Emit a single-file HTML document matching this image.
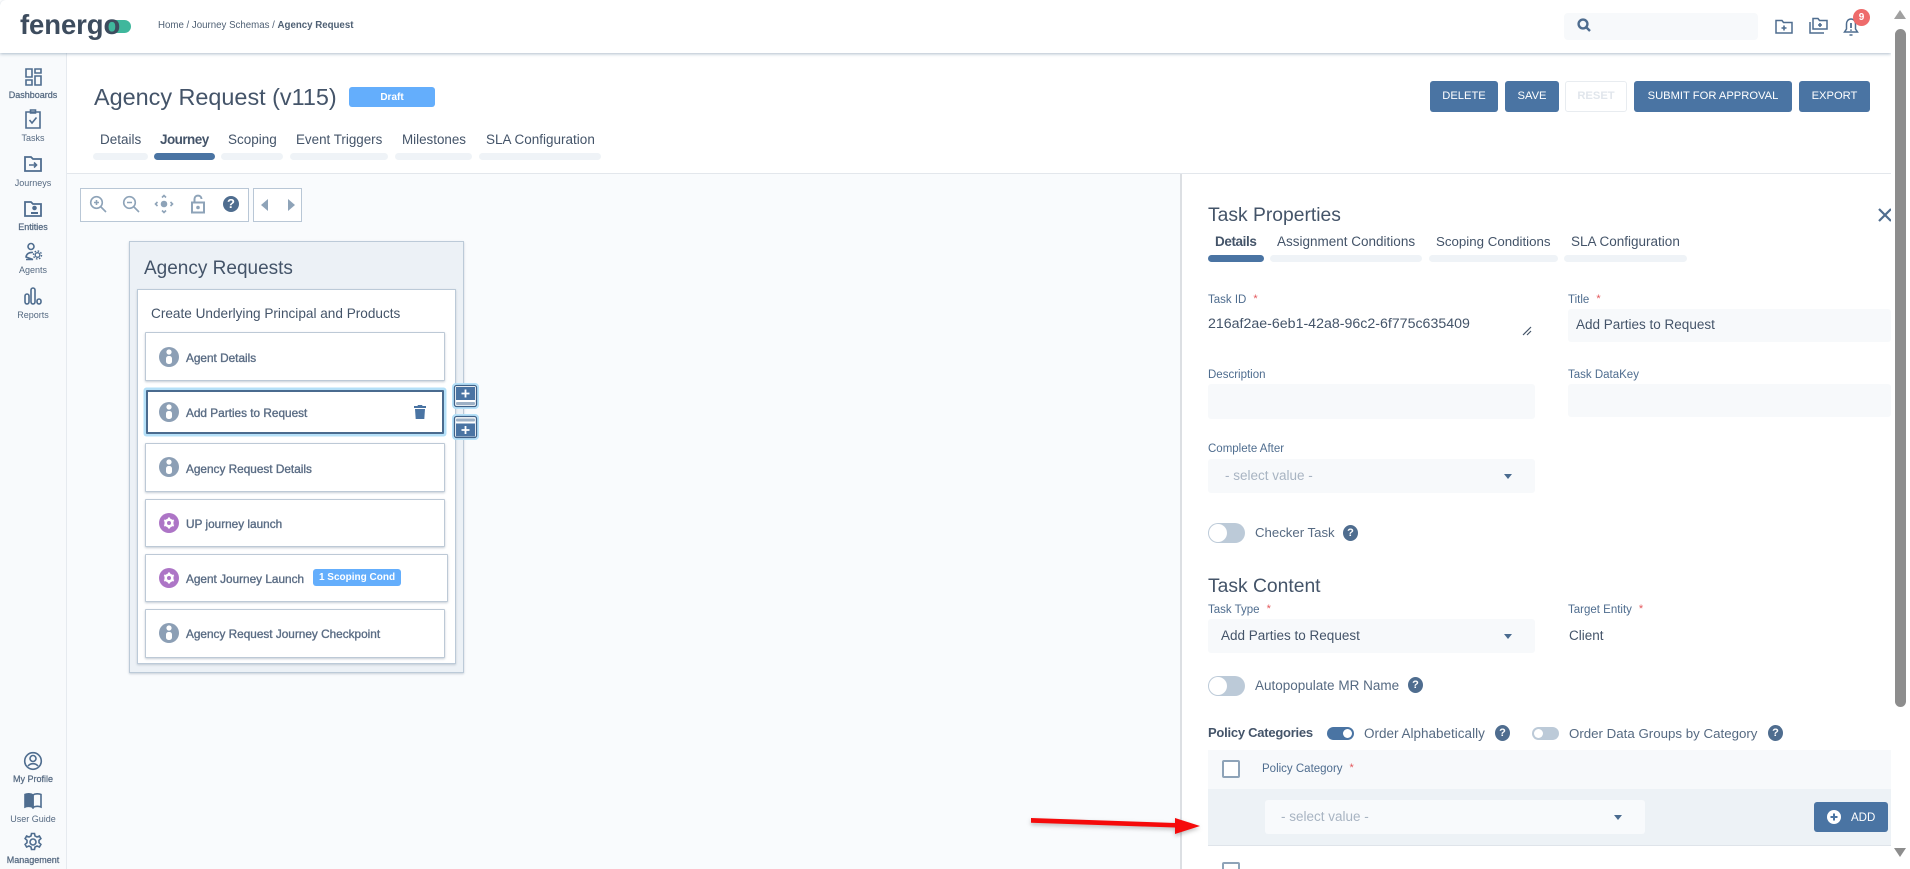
<!DOCTYPE html>
<html lang="en"><head><meta charset="utf-8"><title>Agency Request</title>
<style>
html,body{margin:0;padding:0;width:1910px;height:869px;overflow:hidden;background:#fff}
body{position:relative;font-family:"Liberation Sans",sans-serif;color:#445469}
.a,.t{position:absolute}
.t{white-space:nowrap;line-height:16px;transform:translateY(-7px)}
.bar{position:absolute;height:7px;border-radius:4px;background:#eff3f7}
.bar.on{background:#4a74a3}
.btn{position:absolute;top:81px;height:31px;line-height:31px;text-align:center;background:#4a74a3;color:#fff;font-size:11.2px;border-radius:3px}
.sl{position:absolute;left:0;width:66px;text-align:center;font-size:9px;line-height:12px;color:#566a82}
.sl.b{-webkit-text-stroke:.25px #566a82}
.side svg{position:absolute;left:23px;width:20px;height:20px;fill:none;stroke:#4f6d8f;stroke-width:1.6}
.lab{font-size:11.5px;color:#4f6d8f}
.req{color:#e4575b;font-size:11px;margin-left:7px;position:relative;top:-1px}
.inp{position:absolute;background:#f7f9fb;border-radius:3px}
.card{position:absolute;left:145px;width:299px;background:#fff;border:1px solid #bdc9d6;box-shadow:0 1px 2px rgba(90,110,135,.35);border-radius:1px;box-sizing:border-box}
.ic{position:absolute;left:159px;width:20px;height:20px}
.ct{font-size:11.8px;color:#5a6c84;left:186px;-webkit-text-stroke:.35px #5a6c84}
.val{font-size:13.5px;color:#445469}
.caret{position:absolute;width:0;height:0;border-left:4.5px solid transparent;border-right:4.5px solid transparent;border-top:5px solid #4a6b8f}
.tog{position:absolute;width:37px;height:20px;border-radius:10px;background:#bccad8}
.tog:after{content:"";position:absolute;left:1px;top:1px;width:18px;height:18px;border-radius:50%;background:#fff}
.tog.s{width:27px;height:13px;border-radius:7px}
.tog.s:after{width:9px;height:9px;left:2px;top:2px}
.tog.s.on{background:#4a74a3}
.tog.s.on:after{left:16px}
.q{position:absolute;width:15px;height:16px;border-radius:50%;background:#4f6d8f;color:#fff;font-size:11px;font-weight:bold;text-align:center;line-height:16px}
.h2{font-size:19.3px;color:#445469}
.tool svg{position:absolute;width:20px;height:20px;fill:none;stroke:#8ea3b8;stroke-width:1.6}
.hd svg{position:absolute;fill:none;stroke:#4f6d8f;stroke-width:1.5}
</style></head><body>

<!-- page backgrounds -->
<div class="a" style="left:66px;top:174px;width:1115px;height:695px;background:#f9fbfd"></div>
<div class="a" style="left:66px;top:173px;width:1825px;height:1px;background:#e3e7ec"></div>
<div class="a" style="left:0;top:53px;width:66px;height:816px;background:#f8fafc;border-right:1px solid #e6eaef"></div>

<!-- header -->
<div class="a hd" style="left:0;top:0;width:1891px;height:53px;background:#fff;box-shadow:0 1px 3px rgba(110,135,160,.55);border-radius:6px 0 0 0">
  <div class="a" style="left:108px;top:20px;width:23px;height:13px;border-radius:0 7px 7px 0;background:#3fb79c"></div>
  <div class="t" style="left:20px;top:25px;font-size:27.5px;line-height:36px;transform:translateY(-18px);font-weight:bold;color:#3d4c5e;letter-spacing:-.1px">fenergo</div>
  <div class="t" style="left:158px;top:25px;font-size:9.7px;color:#4f6074">Home / Journey Schemas / <b>Agency Request</b></div>
  <div class="a" style="left:1564px;top:13px;width:194px;height:27px;background:#f7f9fb;border-radius:4px"></div>
  <svg style="left:1577px;top:18px;width:14px;height:14px;stroke-width:2.4" viewBox="0 0 14 14"><circle cx="6" cy="6" r="4.4"/><path d="M9.5 9.5L13 13"/></svg>
  <svg style="left:1775px;top:18px;width:18px;height:16px" viewBox="0 0 18 16"><path d="M1 2.500h6l1.500 2H17V15H1z"/><path d="M9 7.500v5M6.500 10h5" stroke-width="1.600"/></svg>
  <svg style="left:1809px;top:17px;width:19px;height:17px" viewBox="0 0 19 17"><path d="M4 1.500h5l1.500 2H18V12H4z"/><path d="M1 5v11h14"/><path d="M11 6v4M9 8h4" stroke-width="1.600"/></svg>
  <svg style="left:1843px;top:17px;width:16px;height:20px" viewBox="0 0 16 20"><path d="M8 2c-3 0-4.500 2.500-4.500 5v5L1.500 15h13l-2-3V7C12.500 4.500 11 2 8 2z"/><path d="M8 6v5M8 12.500v1.300" stroke-width="1.800"/><path d="M6.500 18h3"/></svg>
  <div class="a" style="left:1853px;top:9px;width:17px;height:17px;border-radius:50%;background:#ee6b6b;color:#fff;font-size:10px;font-weight:bold;line-height:17px;text-align:center">9</div>
</div>

<!-- sidebar -->
<div class="side">
  <svg style="top:67px" viewBox="0 0 20 20"><path d="M3 2h6v8H3zM12 2h6v4h-6zM3 13h6v5H3zM12 9h6v9h-6z"/></svg><div class="sl b" style="top:89px">Dashboards</div>
  <svg style="top:109px" viewBox="0 0 20 20"><path d="M3 3h14v16H3zM7.500 1h5v3h-5z"/><path d="M6.500 11l2.500 3 4.500-5.500"/></svg><div class="sl" style="top:132px">Tasks</div>
  <svg style="top:154px" viewBox="0 0 20 20"><path d="M2 3h6l2 2h8v12H2z" stroke-width="1.800"/><path d="M6 11h7M11 8.500l2.500 2.500-2.500 2.500"/></svg><div class="sl" style="top:177px">Journeys</div>
  <svg style="top:199px" viewBox="0 0 20 20"><path d="M2 3h6l2 2h8v12H2z" stroke-width="1.800"/><circle cx="11.500" cy="9" r="1.500" fill="#4f6d8f"/><path d="M8 14h7" stroke-width="2"/></svg><div class="sl b" style="top:221px">Entities</div>
  <svg style="top:242px" viewBox="0 0 20 20"><circle cx="8" cy="4.500" r="3"/><path d="M10 10.500C6 10 3.500 12 3 15l7 2.500H3"/><circle cx="14.500" cy="13" r="2.300" stroke-width="1.300"/><circle cx="14.500" cy="13" r="4" stroke-width="1.400" stroke-dasharray="1.600 1.540"/></svg><div class="sl" style="top:264px">Agents</div>
  <svg style="top:286px" viewBox="0 0 20 20"><rect x="2" y="8" width="4" height="10" rx="2"/><rect x="8" y="2" width="4" height="16" rx="2"/><rect x="14" y="13" width="4" height="5" rx="2"/></svg><div class="sl" style="top:309px">Reports</div>
  <svg style="top:751px" viewBox="0 0 20 20"><circle cx="10" cy="10" r="8.300"/><circle cx="10" cy="7.500" r="3"/><path d="M5 15c1.500-1.800 3-2.300 5-2.300s3.500.5 5 2.300"/></svg><div class="sl b" style="top:773px">My Profile</div>
  <svg style="top:791px" viewBox="0 0 20 20"><path d="M10 4C8 2.500 4 2.500 2 3.500V16c2-1 6-1 8 .5z" fill="#4f6d8f"/><path d="M10 4c2-1.500 6-1.500 8-.5V16c-2-1-6-1-8 .5z"/></svg><div class="sl" style="top:813px">User Guide</div>
  <svg style="top:832px" viewBox="0 0 20 20"><circle cx="10" cy="10" r="3"/><path d="M8.500 1.500h3l.5 2.500 2 1 2.400-1 1.500 2.600-1.900 1.700v2.400l1.900 1.700-1.500 2.600-2.400-1-2 1-.5 2.500h-3l-.5-2.500-2-1-2.400 1-1.500-2.600 1.900-1.700V8.300L2.100 6.600l1.500-2.600 2.400 1 2-1z"/></svg><div class="sl b" style="top:854px">Management</div>
</div>

<!-- page title + tabs -->
<div class="t" style="left:94px;top:97px;font-size:23.4px;line-height:30px;transform:translateY(-15px);color:#445469">Agency Request (v115)</div>
<div class="a" style="left:349px;top:87px;width:86px;height:20px;background:#64aefc;border-radius:3px;color:#fff;font-size:10px;font-weight:bold;text-align:center;line-height:22px">Draft</div>

<div class="t" style="left:100px;top:139px;font-size:13.500px">Details</div>
<div class="t" style="left:160px;top:139px;font-size:13.500px;font-weight:bold;letter-spacing:-.55px">Journey</div>
<div class="t" style="left:228px;top:139px;font-size:13.500px">Scoping</div>
<div class="t" style="left:296px;top:139px;font-size:13.400px">Event Triggers</div>
<div class="t" style="left:402px;top:139px;font-size:13.400px">Milestones</div>
<div class="t" style="left:486px;top:139px;font-size:13.500px">SLA Configuration</div>
<div class="bar" style="left:93px;top:153px;width:55px"></div>
<div class="bar on" style="left:154px;top:153px;width:61px"></div>
<div class="bar" style="left:221px;top:153px;width:62px"></div>
<div class="bar" style="left:290px;top:153px;width:98px"></div>
<div class="bar" style="left:395px;top:153px;width:77px"></div>
<div class="bar" style="left:479px;top:153px;width:122px"></div>

<!-- action buttons -->
<div class="btn" style="left:1430px;width:68px">DELETE</div>
<div class="btn" style="left:1505px;width:54px">SAVE</div>
<div class="btn" style="left:1565px;width:62px;background:#fff;border:1px solid #e8ecf0;box-sizing:border-box;color:#e1e6ec;line-height:29px;font-weight:bold">RESET</div>
<div class="btn" style="left:1634px;width:158px">SUBMIT FOR APPROVAL</div>
<div class="btn" style="left:1799px;width:71px">EXPORT</div>

<!-- toolbar -->
<div class="a" style="left:80px;top:188px;width:167px;height:32px;background:#fff;border:1px solid #b9c7d6"></div>
<div class="a" style="left:253px;top:188px;width:47px;height:32px;background:#fff;border:1px solid #b9c7d6"></div>
<div class="tool">
  <svg style="left:88px;top:194px" viewBox="0 0 20 20"><circle cx="8.500" cy="8.500" r="5.800"/><path d="M13 13l5 5M6 8.500h5M8.500 6v5"/></svg>
  <svg style="left:121px;top:194px" viewBox="0 0 20 20"><circle cx="8.500" cy="8.500" r="5.800"/><path d="M13 13l5 5M6 8.500h5"/></svg>
  <svg style="left:154px;top:194px" viewBox="0 0 20 20"><circle cx="10" cy="10" r="2.500" fill="#8ea3b8"/><path d="M8 3.500l2-2 2 2M8 16.500l2 2 2-2M3.500 8l-2 2 2 2M16.500 8l2 2-2 2"/></svg>
  <svg style="left:188px;top:194px" viewBox="0 0 20 20"><rect x="4" y="8.500" width="12" height="10" stroke-width="2"/><path d="M6.500 8.500V5c0-4.500 7-4.500 7 0" stroke-width="2"/><circle cx="10" cy="13.500" r="1" fill="#8ea3b8"/></svg>
</div>
<div class="q" style="left:223px;top:196px;width:16px;height:16px;font-size:13px;line-height:16px">?</div>
<div class="a" style="left:261px;top:199px;width:0;height:0;border-top:6px solid transparent;border-bottom:6px solid transparent;border-right:7px solid #8ea3b8"></div>
<div class="a" style="left:288px;top:199px;width:0;height:0;border-top:6px solid transparent;border-bottom:6px solid transparent;border-left:7px solid #8ea3b8"></div>

<!-- group -->
<div class="a" style="left:129px;top:241px;width:333px;height:430px;background:#ecf1f6;border:1px solid #bccad8;box-shadow:0 1px 2px rgba(90,110,135,.3)"></div>
<div class="t" style="left:144px;top:269px;font-size:19px;line-height:24px;transform:translateY(-12px)">Agency Requests</div>
<div class="a" style="left:137px;top:289px;width:317px;height:373px;background:#fff;border:1px solid #bccad8;box-shadow:0 1px 2px rgba(90,110,135,.3)"></div>
<div class="t" style="left:151px;top:313px;font-size:13.600px">Create Underlying Principal and Products</div>

<div class="card" style="top:332px;width:300px;height:49px"></div>
<div class="card" style="left:146px;top:390px;width:298px;height:44px;border:2px solid #4a6b8f;box-shadow:0 0 0 2.500px #b5e0f8"></div>
<div class="card" style="top:443px;width:300px;height:49px"></div>
<div class="card" style="top:499px;width:300px;height:48px"></div>
<div class="card" style="top:554px;width:303px;height:48px"></div>
<div class="card" style="top:609px;width:300px;height:49px"></div>

<svg class="ic" style="top:347px" viewBox="0 0 20 20"><circle cx="10" cy="10" r="10" fill="#8c9fb5"/><circle cx="10" cy="5" r="2.600" fill="#fff"/><rect x="7" y="9" width="6" height="8" rx="2.500" fill="#fff"/></svg>
<svg class="ic" style="top:402px" viewBox="0 0 20 20"><circle cx="10" cy="10" r="10" fill="#8c9fb5"/><circle cx="10" cy="5" r="2.600" fill="#fff"/><rect x="7" y="9" width="6" height="8" rx="2.500" fill="#fff"/></svg>
<svg class="ic" style="top:457px" viewBox="0 0 20 20"><circle cx="10" cy="10" r="10" fill="#8c9fb5"/><circle cx="10" cy="5" r="2.600" fill="#fff"/><rect x="7" y="9" width="6" height="8" rx="2.500" fill="#fff"/></svg>
<svg class="ic" style="top:513px" viewBox="0 0 20 20"><circle cx="10" cy="10" r="10" fill="#ad75c6"/><circle cx="10" cy="10" r="3.300" fill="none" stroke="#fff" stroke-width="2.600"/><path d="M10 4.500v2M10 13.500v2M5.200 7.200l1.800 1M13 11.800l1.800 1M5.200 12.800l1.800-1M13 8.200l1.800-1" stroke="#fff" stroke-width="2"/></svg>
<svg class="ic" style="top:568px" viewBox="0 0 20 20"><circle cx="10" cy="10" r="10" fill="#ad75c6"/><circle cx="10" cy="10" r="3.300" fill="none" stroke="#fff" stroke-width="2.600"/><path d="M10 4.500v2M10 13.500v2M5.200 7.200l1.800 1M13 11.800l1.800 1M5.200 12.800l1.800-1M13 8.200l1.800-1" stroke="#fff" stroke-width="2"/></svg>
<svg class="ic" style="top:623px" viewBox="0 0 20 20"><circle cx="10" cy="10" r="10" fill="#8c9fb5"/><circle cx="10" cy="5" r="2.600" fill="#fff"/><rect x="7" y="9" width="6" height="8" rx="2.500" fill="#fff"/></svg>

<div class="t ct" style="top:357px">Agent Details</div>
<div class="t ct" style="top:412px">Add Parties to Request</div>
<div class="t ct" style="top:468px">Agency Request Details</div>
<div class="t ct" style="top:523px">UP journey launch</div>
<div class="t ct" style="top:578px">Agent Journey Launch</div>
<div class="t ct" style="top:633px">Agency Request Journey Checkpoint</div>
<div class="a" style="left:313px;top:569px;width:88px;height:17px;background:#64aefc;border-radius:3px;color:#fff;font-size:10px;font-weight:bold;text-align:center;line-height:17px">1 Scoping Cond</div>

<svg class="a" style="left:414px;top:405px;width:12px;height:14px" viewBox="0 0 12 14"><path fill="#4a74a3" d="M4 0h4l.6 1H12v2H0V1h3.400zM1 4h10l-.7 10H1.700z"/></svg>

<!-- add above / below buttons -->
<svg class="a" style="left:452px;top:383px;width:27px;height:26px" viewBox="0 0 27 26"><rect x="1" y="1" width="25" height="24" rx="3" fill="#fff" stroke="#b5e0f8" stroke-width="2"/><rect x="2.500" y="2.500" width="22" height="21" rx="2" fill="#fff" stroke="#3f6188" stroke-width="1.300"/><rect x="4" y="4" width="19" height="13" fill="#4a74a3"/><path d="M13.500 6.500v8M9.500 10.500h8" stroke="#fff" stroke-width="1.800"/><rect x="4" y="19" width="19" height="3" rx="1" fill="#9db1c6"/></svg>
<svg class="a" style="left:452px;top:414px;width:27px;height:26px" viewBox="0 0 27 26"><rect x="1" y="1" width="25" height="24" rx="3" fill="#fff" stroke="#b5e0f8" stroke-width="2"/><rect x="2.500" y="2.500" width="22" height="21" rx="2" fill="#fff" stroke="#3f6188" stroke-width="1.300"/><rect x="4" y="4.500" width="19" height="3" rx="1" fill="#9db1c6"/><rect x="4" y="9.500" width="19" height="13" fill="#4a74a3"/><path d="M13.500 12v8M9.500 16h8" stroke="#fff" stroke-width="1.800"/></svg>

<!-- task panel -->
<div class="a" style="left:1180px;top:174px;width:711px;height:695px;background:#fff;border-left:2px solid #dcdfe3;box-sizing:border-box"></div>
<div class="t h2" style="left:1208px;top:216px;line-height:24px;transform:translateY(-12px)">Task Properties</div>
<svg class="a" style="left:1878px;top:208px;width:14px;height:14px" viewBox="0 0 14 14"><path d="M1 1l12 12M13 1L1 13" stroke="#4f6d8f" stroke-width="2.200" fill="none"/></svg>

<div class="t" style="left:1215px;top:241px;font-size:13.500px;font-weight:bold;letter-spacing:-.4px">Details</div>
<div class="t" style="left:1277px;top:241px;font-size:13.500px">Assignment Conditions</div>
<div class="t" style="left:1436px;top:241px;font-size:13.300px">Scoping Conditions</div>
<div class="t" style="left:1571px;top:241px;font-size:13.500px">SLA Configuration</div>
<div class="bar on" style="left:1208px;top:255px;width:56px"></div>
<div class="bar" style="left:1270px;top:255px;width:152px"></div>
<div class="bar" style="left:1429px;top:255px;width:129px"></div>
<div class="bar" style="left:1564px;top:255px;width:123px"></div>

<div class="t lab" style="left:1208px;top:299px">Task ID<span class="req">*</span></div>
<div class="t lab" style="left:1568px;top:299px">Title<span class="req">*</span></div>
<div class="t val" style="left:1208px;top:323px;font-size:14.200px">216af2ae-6eb1-42a8-96c2-6f775c635409</div>
<svg class="a" style="left:1522px;top:326px;width:10px;height:10px" viewBox="0 0 10 10"><path d="M1 9l8-8M5 9l4-4" stroke="#445469" stroke-width="1.200" fill="none"/></svg>
<div class="inp" style="left:1568px;top:309px;width:323px;height:33px"></div>
<div class="t val" style="left:1576px;top:324px">Add Parties to Request</div>

<div class="t lab" style="left:1208px;top:374px">Description</div>
<div class="t lab" style="left:1568px;top:374px">Task DataKey</div>
<div class="inp" style="left:1208px;top:384px;width:327px;height:35px"></div>
<div class="inp" style="left:1568px;top:384px;width:323px;height:33px"></div>

<div class="t lab" style="left:1208px;top:448px">Complete After</div>
<div class="inp" style="left:1208px;top:459px;width:327px;height:34px"></div>
<div class="t val" style="left:1225px;top:475px;color:#a8b4c2">- select value -</div>
<div class="caret" style="left:1504px;top:474px"></div>

<div class="tog" style="left:1208px;top:523px"></div>
<div class="t val" style="left:1255px;top:532px;color:#566a82;font-size:13.200px">Checker Task</div>
<div class="q" style="left:1343px;top:525px">?</div>

<div class="t h2" style="left:1208px;top:587px;line-height:24px;transform:translateY(-12px)">Task Content</div>
<div class="t lab" style="left:1208px;top:609px">Task Type<span class="req">*</span></div>
<div class="t lab" style="left:1568px;top:609px">Target Entity<span class="req">*</span></div>
<div class="inp" style="left:1208px;top:619px;width:327px;height:34px"></div>
<div class="t val" style="left:1221px;top:635px">Add Parties to Request</div>
<div class="caret" style="left:1504px;top:634px"></div>
<div class="t val" style="left:1569px;top:635px">Client</div>

<div class="tog" style="left:1208px;top:676px"></div>
<div class="t val" style="left:1255px;top:685px;color:#566a82">Autopopulate MR Name</div>
<div class="q" style="left:1408px;top:677px">?</div>

<div class="t" style="left:1208px;top:732px;font-size:13px;font-weight:bold;letter-spacing:-.25px">Policy Categories</div>
<div class="tog s on" style="left:1327px;top:727px"></div>
<div class="t val" style="left:1364px;top:733px;color:#566a82">Order Alphabetically</div>
<div class="q" style="left:1495px;top:725px">?</div>
<div class="tog s" style="left:1532px;top:727px"></div>
<div class="t val" style="left:1569px;top:733px;color:#566a82;font-size:13.300px">Order Data Groups by Category</div>
<div class="q" style="left:1768px;top:725px">?</div>

<div class="a" style="left:1208px;top:750px;width:683px;height:39px;background:#f7f9fb"></div>
<div class="a" style="left:1222px;top:760px;width:14px;height:14px;border:2px solid #8ea3b8;border-radius:2px;background:#fff"></div>
<div class="t lab" style="left:1262px;top:768px">Policy Category<span class="req">*</span></div>
<div class="a" style="left:1208px;top:789px;width:683px;height:57px;background:#edf2f6;border-bottom:1px solid #dfe4ea;box-sizing:border-box"></div>
<div class="inp" style="left:1265px;top:800px;width:380px;height:34px;background:#f8fafc"></div>
<div class="t val" style="left:1281px;top:816px;color:#a8b4c2">- select value -</div>
<div class="caret" style="left:1614px;top:815px"></div>
<div class="a" style="left:1814px;top:802px;width:74px;height:30px;background:#4a74a3;border-radius:3px"></div>
<svg class="a" style="left:1827px;top:810px;width:14px;height:14px" viewBox="0 0 14 14"><circle cx="7" cy="7" r="7" fill="#fff"/><path d="M7 3.500v7M3.500 7h7" stroke="#4a74a3" stroke-width="2"/></svg>
<div class="t" style="left:1851px;top:817px;font-size:11.500px;color:#fff">ADD</div>
<div class="a" style="left:1222px;top:862px;width:14px;height:14px;border:2px solid #8ea3b8;border-radius:2px;background:#fff"></div>

<!-- scrollbar -->
<div class="a" style="left:1891px;top:0;width:19px;height:869px;background:#fff"></div>
<div class="a" style="left:1895px;top:29px;width:11px;height:678px;background:#8d8d8d;border-radius:6px"></div>
<div class="a" style="left:1894px;top:10px;width:0;height:0;border-left:6px solid transparent;border-right:6px solid transparent;border-bottom:9px solid #a0a0a0"></div>
<div class="a" style="left:1894px;top:848px;width:0;height:0;border-left:6px solid transparent;border-right:6px solid transparent;border-top:9px solid #8d8d8d"></div>

<!-- red arrow -->
<svg class="a" style="left:1025px;top:810px;width:180px;height:30px;filter:drop-shadow(0 2px 2px rgba(70,70,70,.35))" viewBox="0 0 180 30"><path d="M6 8L150 13V8L175 16 150 24V17.500L6 12.800z" fill="#f50a0a"/></svg>

</body></html>
